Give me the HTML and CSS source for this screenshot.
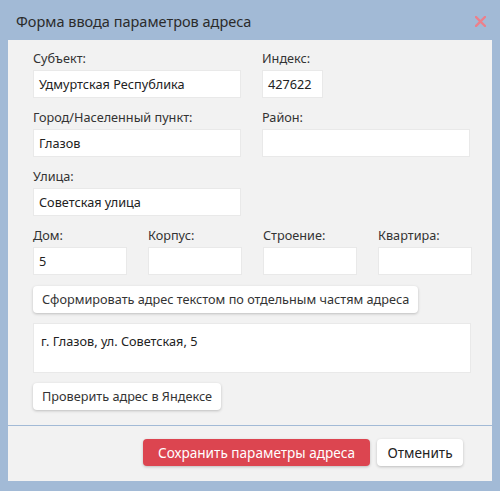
FILE: index.html
```html
<!DOCTYPE html>
<html lang="ru">
<head>
<meta charset="utf-8">
<title>Форма ввода параметров адреса</title>
<link rel="stylesheet" href="styles.css">
</head>
<body>
<div class="window">
  <div class="titlebar">
    <span class="title">Форма ввода параметров адреса</span>
    <svg class="close" width="11" height="11" viewBox="0 0 11 11"><path d="M1 1L10 10M10 1L1 10" stroke="#ec808b" stroke-width="2.4" stroke-linecap="square"/></svg>
  </div>
  <div class="panel">
    <div class="body">
      <div class="row two">
        <div class="field"><label>Субъект:</label><div class="input">Удмуртская Республика</div></div>
        <div class="field"><label>Индекс:</label><div class="input short">427622</div></div>
      </div>
      <div class="row two">
        <div class="field"><label>Город/Населенный пункт:</label><div class="input">Глазов</div></div>
        <div class="field"><label>Район:</label><div class="input"></div></div>
      </div>
      <div class="row two">
        <div class="field"><label>Улица:</label><div class="input">Советская улица</div></div>
        <div class="field"></div>
      </div>
      <div class="row four">
        <div class="field"><label>Дом:</label><div class="input">5</div></div>
        <div class="field"><label>Корпус:</label><div class="input"></div></div>
        <div class="field"><label>Строение:</label><div class="input"></div></div>
        <div class="field"><label>Квартира:</label><div class="input"></div></div>
      </div>
      <div class="btn-row"><button class="btn">Сформировать адрес текстом по отдельным частям адреса</button></div>
      <div class="textarea">г. Глазов, ул. Советская, 5</div>
      <div class="btn-row"><button class="btn">Проверить адрес в Яндексе</button></div>
    </div>
    <div class="footer">
      <button class="btn btn-save">Сохранить параметры адреса</button>
      <button class="btn btn-cancel">Отменить</button>
    </div>
  </div>
</div>
</body>
</html>
```

FILE: styles.css
```css
* { box-sizing: border-box; }
html, body {
  margin: 0;
  padding: 0;
  width: 500px;
  height: 491px;
  overflow: hidden;
  background: #a2bad6;
  font-family: "Noto Sans", "Open Sans", sans-serif;
  color: #333;
}
.window {
  width: 500px;
  height: 491px;
}
.titlebar {
  height: 40px;
  display: flex;
  align-items: center;
  justify-content: space-between;
  padding: 0 14px 0 16px;
}
.title {
  font-size: 14.5px;
  color: #2b2b2b;
  margin-top: 1px;
}
.close {
  display: block;
  margin-top: 2px;
}
.panel {
  margin: 0 8px;
  height: 441px;
  background: #f2f2f2;
  display: flex;
  flex-direction: column;
}
.body {
  padding: 10px 21px 0 25px;
  height: 386px;
  border-bottom: 1px solid #a2bad6;
}
.row {
  display: grid;
  column-gap: 21px;
  margin-bottom: 11px;
}
.row.two { grid-template-columns: 208px 208px; }
.row.four { grid-template-columns: 94px 94px 94px 94px; }
.field label {
  display: block;
  font-size: 12.7px;
  line-height: 16px;
  margin-bottom: 4px;
  color: #333;
}
.input {
  height: 28px;
  background: #fff;
  border: 1px solid #e9e9e9;
  font-size: 12.7px;
  line-height: 26px;
  padding: 0 5px;
  color: #222;
  white-space: nowrap;
}
.input.short { width: 61px; }
.btn-row {
  display: flex;
  margin-bottom: 10px;
}
.btn {
  font-family: inherit;
  font-size: 12.7px;
  color: #333;
  background: #fff;
  border: none;
  border-radius: 4px;
  box-shadow: 0 1px 3px rgba(0, 0, 0, 0.22);
  height: 27px;
  padding: 0 9px;
  line-height: 27px;
  cursor: pointer;
}
.textarea {
  height: 50px;
  width: 438px;
  background: #fff;
  border: 1px solid #e9e9e9;
  font-size: 12.7px;
  line-height: 18px;
  padding: 8px 7px;
  color: #222;
  margin-bottom: 10px;
}
.footer {
  display: flex;
  justify-content: flex-end;
  gap: 7px;
  padding: 13px 29px 0 0;
}
.btn-save {
  background: #dc4550;
  color: #fff;
  font-size: 13.6px;
  width: 227px;
  padding: 0;
}
.btn-cancel {
  font-size: 13.6px;
  width: 86px;
  padding: 0;
  color: #222;
}
```
